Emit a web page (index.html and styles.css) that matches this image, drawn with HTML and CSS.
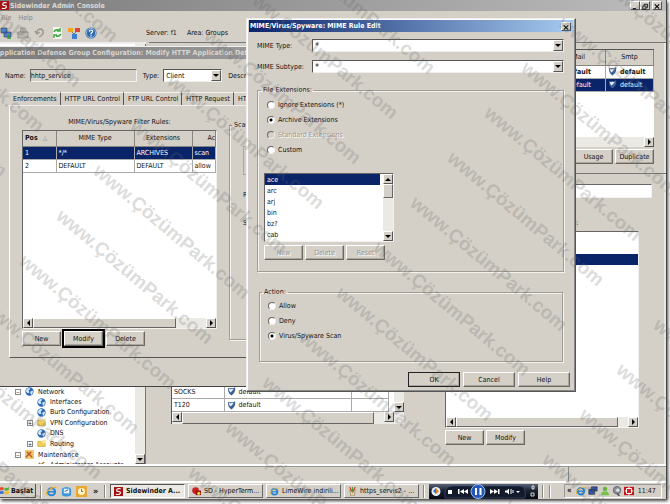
FILE: index.html
```html
<!DOCTYPE html>
<html lang="en">
<head>
<meta charset="utf-8">
<title>Sidewinder Admin Console</title>
<link rel="stylesheet" href="styles.css">
</head>
<body>
<svg class="defs" width="0" height="0" aria-hidden="true">
  <symbol id="globe" viewBox="0 0 10 10"><circle cx="5" cy="5" r="4.6" fill="#2a68b8"/><path d="M2 2Q5 0 6 2L4 4 5 6 3 7 1 5zM6 5L9 4Q9 7 7 9L6 7z" fill="#d5eafa"/></symbol>
  <symbol id="shield" viewBox="0 0 10 10"><path d="M1 1Q3 2 5 1 7 2 9 0 10 6 5 9.500 1 7 1 1z" fill="#3c5f96"/><path d="M2 2Q4 3 5 2 7 3 8 2L4 6Q2 5 2 2z" fill="#e4edf8"/></symbol>
  <symbol id="sidew" viewBox="0 0 10 10"><path fill="#a31515" d="M0 0H10V10H0z"/><path d="M7.500 2Q3 1 3 3.500 3 5 5 5 7.500 5 7 7 6 9 2 8" fill="none" stroke="#fff" stroke-width="1.300"/></symbol>
  <symbol id="ie" viewBox="0 0 12 12"><circle cx="6" cy="6.300" r="3.900" fill="none" stroke="#2484d8" stroke-width="2.200"/><path d="M3 6.300H10" stroke="#2484d8" stroke-width="1.600"/><path d="M1 10Q-1 6 5 3 10 0 11.500 2" fill="none" stroke="#e9b52a" stroke-width="1.200"/></symbol>
  <symbol id="folder" viewBox="0 0 12 10"><path d="M1 2H5L6 3H11V9H1z" fill="#f1cc55" stroke="#b98b1d" stroke-width=".6"/><path d="M7 0H12V5H7z" fill="#f9e88c"/></symbol>
</svg>

<main class="screen">
  <header class="app-title"><svg class="i9"><use href="#sidew"/></svg><span>Sidewinder Admin Console</span>
    <div class="caps">
      <button class="cap" aria-label="Minimize"><svg viewBox="0 0 8 8"><path d="M1.500 6.500H5" stroke="#000" stroke-width="1.300"/></svg></button><button class="cap" aria-label="Restore"><svg viewBox="0 0 8 8"><path d="M3 3V1.500H7V5H5.500M1.500 3.500H5V7H1.500z" fill="none" stroke="#000"/></svg></button><button class="cap cap-x" aria-label="Close console"><svg viewBox="0 0 8 8"><path d="M1.500 1.500L6.500 6.500M6.500 1.500L1.500 6.500" stroke="#000" stroke-width="1.200"/></svg></button>
    </div>
  </header>
  <nav class="menu"><a href="#file">File</a><a href="#help">Help</a></nav>
  <div class="tools">
    <button aria-label="Connect"><svg viewBox="0 0 12 12"><path d="M1 1H7V6H1zM4 5H11V10H4z" fill="#4a83cc" stroke="#335" stroke-width=".6"/><path d="M7 11H11M9 7V12" stroke="#36a33b" stroke-width="1.500"/></svg></button>
    <button aria-label="Save"><svg viewBox="0 0 12 12"><path d="M1 5H11V11H1zM4 1H8L10 5H3z" fill="#bdb9b2" stroke="#908d86" stroke-width=".8"/></svg></button>
    <button aria-label="Undo"><svg viewBox="0 0 12 12"><path d="M3 6Q3 2 7 2 11 4 8 8L5 10M1 4L3 7 6 5" fill="none" stroke="#9c9993" stroke-width="1.500"/></svg></button>
    <button aria-label="Refresh"><svg viewBox="0 0 12 12"><path d="M2 0H9L11 2V12H2z" fill="#f4f8f0"/><path d="M3 5Q4 2 8 3M9 1V4H6M10 7Q8 10 5 9M3 11V8H6" fill="none" stroke="#3ca83c" stroke-width="1.500"/></svg></button>
    <button aria-label="Areas"><svg viewBox="0 0 12 12"><path d="M2 3L6 7 10 3M6 7V10" stroke="#777" fill="none"/><path d="M0 1H5V5H0z" fill="#f1a51d"/><path d="M7 1H12V5H7z" fill="#dc4635"/><path d="M4 7H9V12H4z" fill="#3d7fd4"/></svg></button>
    <button aria-label="Help topics"><svg viewBox="0 0 12 12"><circle cx="6" cy="6" r="5.600" fill="#2d68ad"/><circle cx="6" cy="6" r="4.600" fill="none" stroke="#b9d3ee" stroke-width=".7"/><path d="M4.300 4.700Q4.500 3 6 3 8 3.200 7.500 5L6 6.500V7.500M6 8.300V9.500" fill="none" stroke="#fff" stroke-width="1.200"/></svg></button>
    <span class="server">Server: f1</span><span>Area: Groups</span>
  </div>

  <section class="work">
    <div class="tree-pane">
      <ul class="tree">
        <li class="lvl1"><i class="box">−</i><svg class="i9"><use href="#globe"/></svg>Network</li>
        <li class="lvl2"><svg class="i9"><use href="#globe"/></svg>Interfaces</li>
        <li class="lvl2"><svg class="i9"><use href="#globe"/></svg>Burb Configuration</li>
        <li class="lvl2x"><i class="box">+</i><svg class="i9"><use href="#folder"/></svg>VPN Configuration</li>
        <li class="lvl2"><svg class="i9"><use href="#globe"/></svg>DNS</li>
        <li class="lvl2x"><i class="box">+</i><svg class="i9"><use href="#folder"/></svg>Routing</li>
        <li class="lvl1"><i class="box">−</i><svg class="i9" viewBox="0 0 10 10"><path d="M0 0H10V10H0z" fill="#f4c76c"/><path d="M1 8L7 2M2 2L8 8" stroke="#bd5222" stroke-width="1.500"/></svg>Maintenance</li>
        <li class="lvl2"><svg class="i9" viewBox="0 0 10 10"><path d="M1 7L8 1M2 2L8 8" stroke="#a77b44" stroke-width="1.500"/></svg>Administrator Accounts</li>
      </ul>
      <div class="vbar"><button class="arw dn" aria-label="Scroll tree down"></button></div>
    </div>
    <div class="content">
      <div class="upper">
        <div class="groups">
          <table class="grid g-top">
            <thead><tr><th>Mail</th><th>Smtp</th></tr></thead>
            <tbody><tr class="b"><td>default</td><td><svg class="i9"><use href="#shield"/></svg>default</td></tr>
            <tr class="sel"><td>default</td><td><svg class="i9"><use href="#shield"/></svg>default</td></tr></tbody>
          </table>
          <div class="hbar"><button class="arw rt" aria-label="Scroll groups right"></button></div>
        </div>
        <div class="row"><button class="btn">Usage</button><button class="btn">Duplicate</button></div>
      </div>
      <div class="lower">
        <div class="left-low">
          <div class="services">
            <div class="svc-row">
              <table class="grid g-svc"><tbody>
                <tr><td>SOCKS</td><td><svg class="i9"><use href="#shield"/></svg>default</td><td></td></tr>
                <tr><td>T120</td><td><svg class="i9"><use href="#shield"/></svg>default</td><td></td></tr>
              </tbody></table>
              <div class="vbar"><button class="arw dn" aria-label="Scroll services down"></button></div>
            </div>
            <div class="hbar svc-bar"><button class="arw lt" aria-label="Scroll services left"></button><span class="thumb"></span><button class="arw rt" aria-label="Scroll services right"></button></div>
          </div>
        </div>
        <div class="right-low">
          <input class="well name-in" aria-label="Group name">
          <h2>Defenses in group:</h2>
          <div class="well members"><div class="picked"></div>
            <div class="hbar"><button class="arw lt" aria-label="Scroll members left"></button><span class="thumb"></span><button class="arw rt" aria-label="Scroll members right"></button></div>
          </div>
          <div class="row"><button class="btn">New</button><button class="btn">Modify</button></div>
        </div>
      </div>
    </div>
  </section>
  <div class="status"><span></span><span></span></div>

  <footer class="taskbar">
    <button class="start"><svg class="i9" viewBox="0 0 10 10"><path d="M0 2Q2 0 4 2V5Q2 3.500 0 5z" fill="#e54a2c"/><path d="M5 2Q7 3 10 1V4Q7 6 5 5z" fill="#57ad36"/><path d="M0 6Q2 4.500 4 6V9Q2 8 0 9z" fill="#3b70ce"/><path d="M5 6Q7 7 10 5V8Q7 10 5 9z" fill="#f2bd26"/></svg>Başlat</button>
    <i class="sep"></i>
    <div class="quick"><svg viewBox="0 0 12 12"><use href="#ie"/></svg><svg viewBox="0 0 12 12"><path d="M1 3Q6-1 11 3V10Q6 13 1 10z" fill="#3d94d6"/><path d="M3 3H9V8H3z" fill="#eaf5fc"/><path d="M4 6L8 4" stroke="#28578c"/></svg><svg viewBox="0 0 12 12"><path d="M0 0H12V12H0z" fill="#e8a832"/><circle cx="6" cy="6" r="3.800" fill="#fdf4d2"/><path d="M6 3V6H8" fill="none" stroke="#8f641b"/></svg><b>»</b></div>
    <i class="sep"></i>
    <button class="task on"><svg class="i9"><use href="#sidew"/></svg><span>Sidewinder A...</span></button>
    <button class="task"><svg class="i9" viewBox="0 0 10 10"><circle cx="4" cy="4" r="3.800" fill="#cf2020"/><path d="M4 4H10V9H4z" fill="#8d1512"/><circle cx="7.500" cy="7" r="1.800" fill="#e9d244"/></svg><span>SD - HyperTerm...</span></button>
    <button class="task"><svg class="i9"><use href="#ie"/></svg><span>LimeWire indirili...</span></button>
    <button class="task"><svg class="i9" viewBox="0 0 10 10"><path d="M2 3H8L7 10H3z" fill="#d9cfae" stroke="#8a6f4d" stroke-width=".6"/><path d="M2 0L4 5M8 0L5 6" stroke="#cf3d27" stroke-width="1.300"/><path d="M5 0V5" stroke="#4b9a3d" stroke-width="1.300"/></svg><span>https_servis2 - ...</span></button>
    <i class="sep"></i>
    <svg class="media" viewBox="0 0 109 15"><defs><linearGradient id="mg" x2="0" y2="1"><stop stop-color="#5a6478"/><stop offset=".45" stop-color="#19202e"/><stop offset="1" stop-color="#060a14"/></linearGradient></defs><path d="M0 0H109V15H0z" fill="url(#mg)"/><path d="M16 14Q14 2 24 2H90Q98 2 96 14z" fill="#121a2b" stroke="#3c5274" stroke-width=".7"/><circle cx="7" cy="7.500" r="4.500" fill="#e8f0fa"/><path d="M7 4L10 7.500 7 10z" fill="#e18329"/><path d="M4 7L7 4V10z" fill="#2a74cb"/><path d="M19 6H23V10H19zM29 5H30.500V10H29zM35 5V10L31 7.500zM39 5V10L35 7.500zM61 5V10L65 7.500zM65 5V10L69 7.500zM69 5H70.500V10H69zM76 6.500H78L80 4.500V10.500L78 8.500H76zM87 7H91L89 9z" fill="#fff"/><path d="M82 5V10M84 6V9" stroke="#fff"/><circle cx="49" cy="7.500" r="7" fill="#2457b8" stroke="#9bc1f2"/><path d="M46 4H48V11H46zM50.500 4H52.500V11H50.500z" fill="#fff"/><path d="M103 2H105V5H103zM102 9H105V12H102z" fill="none" stroke="#fff" stroke-width=".8"/></svg>
    <i class="sep"></i><i class="sep"></i>
    <div class="tray"><b>«</b><svg viewBox="0 0 12 12"><use href="#ie"/></svg><svg viewBox="0 0 12 12"><path d="M4 1H11V6H4zM1 4H8V10H1z" fill="#3158ae" stroke="#223" stroke-width=".7"/></svg><svg viewBox="0 0 12 12"><circle cx="6" cy="3.500" r="2.700" fill="#68b440"/><path d="M1 11Q2 5 6 7 10 5 11 11z" fill="#74c34a"/></svg><svg viewBox="0 0 12 12"><circle cx="6" cy="5" r="4.500" fill="#8c939e" stroke="#5c6068"/><circle cx="7" cy="5" r="2" fill="#dfe3e8"/><path d="M6 9L9 12" stroke="#555" stroke-width="2"/></svg><svg viewBox="0 0 12 12"><path d="M0 1H12V11H0z" fill="#c5161d"/><path d="M3 3H9V9H3zM6 1V4M6 8V11M1 6H4M8 6H11" fill="none" stroke="#fff" stroke-width="1.200"/></svg><time>11:47</time></div>
  </footer>

  <section class="win app-win">
    <h1 class="bar off">Application Defense Group Configuration: Modify HTTP Application Defense</h1>
    <div class="form-row"><label for="nm">Name:</label><input id="nm" class="well" value="hhtp_service" readonly><label for="ty">Type:</label><span class="pick"><select id="ty"><option>Client</option></select><i class="arw dn"></i></span><span>Description:</span></div>
    <nav class="tabs"><button>Enforcements</button><button>HTTP URL Control</button><button>FTP URL Control</button><button>HTTP Request</button><button>HTTP Reply</button></nav>
    <div class="panel">
      <div class="rules">
        <h2>MIME/Virus/Spyware Filter Rules:</h2>
        <div class="well rules-box">
          <table class="grid g-rules">
            <thead><tr><th class="first">Pos <small>△</small></th><th>MIME Type</th><th>Extensions</th><th>Action</th></tr></thead>
            <tbody><tr class="sel"><td>1</td><td>*/*</td><td>ARCHIVES</td><td>scan</td></tr><tr><td>2</td><td>DEFAULT</td><td>DEFAULT</td><td>allow</td></tr></tbody>
          </table>
          <div class="hbar"><button class="arw lt" aria-label="Scroll rules left"></button><span class="thumb"></span><button class="arw rt" aria-label="Scroll rules right"></button></div>
        </div>
        <div class="row"><button class="btn">New</button><button class="btn marked">Modify</button><button class="btn">Delete</button></div>
      </div>
      <fieldset class="scan"><legend>Scan</legend><div class="scan-box"></div><p>R</p><p>S</p></fieldset>
    </div>
  </section>

  <section class="win dialog">
    <h1 class="bar on"><span>MIME/Virus/Spyware: MIME Rule Edit</span><button class="cap" aria-label="Close dialog"><svg viewBox="0 0 8 8"><path d="M1.500 1.500L6.500 6.500M6.500 1.500L1.500 6.500" stroke="#000" stroke-width="1.200"/></svg></button></h1>
    <div class="dlg-body">
      <div class="pair"><label for="mt">MIME Type:</label><span class="pick"><select id="mt"><option>*</option></select><i class="arw dn"></i></span></div>
      <div class="pair"><label for="ms">MIME Subtype:</label><span class="pick"><select id="ms"><option>*</option></select><i class="arw dn"></i></span></div>
      <fieldset class="ext"><legend>File Extensions:</legend>
        <label class="opt"><input type="radio" name="ext">Ignore Extensions (*)</label>
        <label class="opt"><input type="radio" name="ext" checked>Archive Extensions</label>
        <label class="opt dis"><input type="radio" name="ext" disabled>Standard Extensions</label>
        <label class="opt"><input type="radio" name="ext">Custom</label>
        <div class="well listbox"><ul><li class="sel">ace</li><li>arc</li><li>arj</li><li>bin</li><li>bz?</li><li>cab</li></ul><div class="vbar"><button class="arw up" aria-label="Scroll list up"></button><span class="thumb"></span><button class="arw dn" aria-label="Scroll list down"></button></div></div>
        <div class="row"><button class="btn" disabled>New</button><button class="btn" disabled>Delete</button><button class="btn" disabled>Reset</button></div>
      </fieldset>
      <fieldset class="act"><legend>Action:</legend>
        <label class="opt"><input type="radio" name="act">Allow</label>
        <label class="opt"><input type="radio" name="act">Deny</label>
        <label class="opt"><input type="radio" name="act" checked>Virus/Spyware Scan</label>
      </fieldset>
      <div class="row ends"><button class="btn ok">OK</button><button class="btn">Cancel</button><button class="btn">Help</button></div>
    </div>
  </section>
</main>
<svg class="marks" aria-hidden="true"></svg>
<script src="marks.js"></script>
</body>
</html>
```
FILE: styles.css
```css
* { box-sizing: border-box; margin: 0; padding: 0; }
html, body { height: 100%; }
body { overflow: hidden; background: #fff; color: #111; font: 7px/10px "DejaVu Sans Condensed", "DejaVu Sans", sans-serif; }
button, input, select { font: inherit; color: inherit; border: 0; border-radius: 0; background: #d4d0c8; }
h1, h2 { font: inherit; }
ul { list-style: none; }
a { color: inherit; text-decoration: none; }
table { border-collapse: collapse; table-layout: fixed; width: 100%; }
svg { display: block; flex: none; }
.defs, .marks { position: absolute; }
.i9 { width: 9px; height: 9px; }
.marks { inset: 0; width: 100%; height: 100%; z-index: 9; pointer-events: none; fill: rgba(100, 100, 100, .24); font: bold 19px "Liberation Sans", sans-serif; }

.screen { position: relative; display: flex; flex-direction: column; height: calc(100% - 5px); margin-right: 3px; background: #d4d0c8; border-right: 1px solid #444; box-shadow: 1px 2px 3px #444; overflow: hidden; }
.app-title { display: flex; align-items: center; gap: 1px; height: 11px; font-weight: bold; color: #dedbd4; background: linear-gradient(90deg, #7c7c7c, #bcbcbc); }
.caps { margin-left: auto; display: flex; padding-right: 4px; }
.cap { width: 10px; height: 9px; padding: 1px; border: 1px solid; border-color: #fff #555 #555 #fff; }
.cap svg { width: 8px; height: 7px; margin-left: -1px; }
.cap-x { margin-left: 2px; }
.menu { display: flex; gap: 7px; height: 13px; padding: 2px 1px; color: #8b8780; }
.tools { display: flex; align-items: center; gap: 5px; height: 18px; padding-bottom: 1px; }
.tools button { width: 12px; height: 12px; }
.server { margin: 0 5px 0 44px; }

.well { background: #fff; border: 1px solid; border-color: #666 #f4f2ee #f4f2ee #666; }
.btn { width: 39px; height: 15px; text-align: center; border: 1px solid; border-color: #fff #6a6761 #6a6761 #fff; box-shadow: inset -1px -1px #aaa69e; }
.btn:disabled { color: #98948d; text-shadow: 1px 1px #fff; }
.row { display: flex; gap: 2px; }
.arw { display: grid; place-items: center; flex: none; width: 10px; height: 10px; background: #d4d0c8; border: 1px solid; border-color: #fff #555 #555 #fff; }
.arw::after { content: ""; border: 2px solid transparent; }
.dn::after { border-width: 3px 3px 0; border-top-color: #000; }
.up::after { border-width: 0 3px 3px; border-bottom-color: #000; }
.lt::after { border-width: 3px 3px 3px 0; border-right-color: #000; }
.rt::after { border-width: 3px 0 3px 3px; border-left-color: #000; }
.hbar { display: flex; justify-content: flex-end; height: 10px; background: #ebe9e4; }
.vbar { display: flex; flex-direction: column; justify-content: flex-end; width: 10px; background: #ebe9e4; }
.thumb { background: #d4d0c8; border: 1px solid; border-color: #fff #666 #666 #fff; }
.hbar .thumb { flex: 1; margin-right: 10px; }
.grid th { font-weight: normal; height: 15px; background: #d4d0c8; border-right: 1px solid #88857f; border-bottom: 1px solid #88857f; }
.grid td { height: 13px; padding: 0 2px; border-right: 1px solid #aaa; border-bottom: 1px solid #aaa; white-space: nowrap; overflow: hidden; }
.grid td svg { display: inline-block; vertical-align: middle; margin-right: 3px; }
.sel, .grid .sel { background: #0a246a; color: #fff; }
.b { font-weight: bold; }

.work { flex: 1; display: flex; min-height: 0; }
.tree-pane { display: flex; align-items: flex-end; width: 149px; background: #fff; border-right: 3px solid #d4d0c8; box-shadow: inset 0 2px #eee, inset -1px 0 #777; }
.tree-pane .vbar { align-self: stretch; margin-right: 1px; }
.tree { flex: 1; height: 78px; overflow: hidden; white-space: nowrap; }
.tree li { display: flex; align-items: center; gap: 4px; height: 10px; }
.tree .lvl1 { height: 11px; padding-left: 15px; }
.tree .lvl2 { padding-left: 37px; }
.tree .lvl2x { height: 11px; padding-left: 27px; }
.box { display: grid; place-items: center; width: 6px; height: 6px; border: 1px solid #8a8a8a; font: 6px/4px "Liberation Sans", sans-serif; }
.content { flex: 1; display: flex; flex-direction: column; border-top: 1px solid #777; padding-left: 22px; box-shadow: inset -2px 0 #e8e6e1; }
.upper { height: 131px; padding: 6px 12px 0 0; border-bottom: 1px solid #777; }
.groups { height: 98px; margin-bottom: 2px; display: flex; flex-direction: column; justify-content: space-between; background: #fff; border-top: 1px solid #555; }
.g-top th:last-child { width: 48px; }
.g-top tr > :first-child { padding-right: 14px; text-align: right; }
.g-top th:first-child { padding-right: 20px; }
.upper .row { justify-content: flex-end; }
.lower { flex: 1; display: flex; justify-content: space-between; }
.left-low { display: flex; align-items: flex-end; padding-bottom: 40px; }
.services { width: 233px; border-left: 1px solid #555; }
.svc-row { display: flex; background: #fff; }
.svc-row .vbar { margin-left: 5px; }
.g-svc { flex: 1; }
.g-svc td:nth-child(1) { width: 52px; }
.g-svc td:nth-child(3) { width: 37px; }
.svc-bar { padding-right: 10px; height: 12px; }
.right-low { display: flex; flex-direction: column; width: 207px; margin-right: 14px; padding: 10px 0 19px; }
.name-in { width: 100%; height: 14px; }
.right-low h2 { margin: 20px 0 3px 74px; }
.members { flex: 1; width: 194px; margin-bottom: 2px; display: flex; flex-direction: column; justify-content: space-between; }
.picked { margin-top: 22px; height: 11px; background: #0a246a; }
.status { display: flex; height: 18px; border-top: 2px solid #fff; box-shadow: inset 0 1px #999; gap: 2px; }
.status span { flex: 1; border-bottom: 1px solid #fff; }
.status span:last-child { flex: 0 0 98px; border-left: 1px solid #888; }

.taskbar { display: flex; align-items: center; height: 17px; padding-right: 4px; border-top: 1px solid #fff; gap: 3px; }
.start { display: flex; align-items: center; gap: 2px; width: 36px; height: 14px; font-weight: bold; border-right: 1px solid #555; border-bottom: 1px solid #555; white-space: nowrap; }
.sep { width: 2px; height: 13px; border-left: 1px solid #888; border-right: 1px solid #fff; margin: 0 1px; }
.quick { display: flex; align-items: center; gap: 4px; width: 54px; }
.quick svg { width: 11px; height: 11px; }
.quick b { margin-left: 2px; font-size: 9px; }
.task { display: flex; align-items: center; gap: 3px; flex: 0 1 75px; min-width: 0; height: 14px; padding-left: 3px; border: 1px solid; border-color: #fff #666 #666 #fff; white-space: nowrap; overflow: hidden; }
.task.on { font-weight: bold; background: #ebe9e4; border-color: #555 #fff #fff #555; }
.media { flex: none; width: 109px; height: 15px; }
.tray { display: flex; align-items: center; gap: 2px; width: 98px; height: 14px; padding-left: 2px; margin-left: auto; border: 1px solid; border-color: #999 #fff #fff #999; }
.tray svg { width: 10px; height: 10px; }
.tray b { margin-right: 2px; font-size: 8px; }
.tray time { margin-left: 2px; }

.win { position: absolute; background: #d4d0c8; }
.bar { display: flex; align-items: center; height: 12px; font-weight: bold; white-space: nowrap; overflow: hidden; }
.app-win { left: 0; top: 46px; width: 560px; height: 341px; border-bottom: 1px solid #444; border-top: 1px solid #eee; }
.bar.off { color: #d9d6d0; background: linear-gradient(90deg, #7c7c7c, #bcbcbc); text-indent: -5px; }
.form-row { display: flex; align-items: center; height: 13px; margin: 10px 0 10px 5px; gap: 4px; }
.form-row .well { width: 107px; height: 13px; margin-right: 2px; background: #d4d0c8; }
.form-row .pick { flex: 0 0 59px; margin-right: 2px; }
.pick { position: relative; flex: 1; display: flex; height: 13px; background: #fff; border: 1px solid; border-color: #555 #eee #eee #555; }
.pick select { appearance: none; width: 100%; padding-left: 2px; background: transparent; outline: 0; }
.pick .arw { position: absolute; right: 0; top: 0; height: 11px; pointer-events: none; }
.tabs { display: flex; height: 13px; margin-left: 9px; }
.tabs button { padding: 0 3px 0 4px; border-top: 1px solid #f4f2ee; border-right: 1px solid #555; white-space: nowrap; }
.panel { display: flex; gap: 12px; margin-left: 9px; height: 253px; padding: 11px 0 0 12px; border: 1px solid; border-color: #eee #555 #555 #fff; }
.rules { width: 195px; }
.rules h2 { text-align: center; height: 13px; }
.rules-box { height: 199px; margin-bottom: 2px; display: flex; flex-direction: column; justify-content: space-between; overflow: hidden; }
.g-rules th:nth-child(1) { width: 33px; }
.g-rules th:nth-child(2) { width: 78px; }
.g-rules th:nth-child(3) { width: 58px; }
.g-rules th:nth-child(4) { padding-left: 15px; overflow: hidden; text-align: left; }
.grid .first { font-weight: bold; text-align: left; padding-left: 2px; }
.first small { font-size: 6px; color: #777; margin-left: 3px; }
.rules-box .thumb { margin-right: 30px; }
.marked { outline: 2px solid #000; margin: 0 1px; }
fieldset { border: 1px solid #a09d96; box-shadow: 1px 1px #f4f2ee, inset 1px 1px #f4f2ee; min-width: 0; }
legend { padding: 0 2px; }
.scan { flex: 1; height: 220px; margin-top: 3px; padding-left: 13px; }
.scan legend { margin-left: -11px; }
.scan-box { height: 29px; margin: 16px 0 15px; border: 1px solid #aaa69e; }
.scan p { height: 28px; }

.dialog { left: 246px; top: 18px; width: 330px; height: 374px; border: 1px solid; border-color: #eee #555 #555 #eee; box-shadow: inset -1px -1px #888, inset 1px 1px #fff; padding: 1px 2px 2px; }
.bar.on { justify-content: space-between; padding: 0 2px 0 1px; color: #fff; background: linear-gradient(90deg, #0a246a, #a6caf0); }
.dlg-body { padding: 7px 9px 0 8px; }
.pair { display: flex; align-items: center; margin-bottom: 8px; }
.pair label { width: 55px; }
.pair select { font-size: 9px; }
.ext, .act { padding: 1px 6px 0 8px; }
.ext legend { margin-left: -5px; }
.ext { height: 187px; margin-bottom: 15px; margin-top: 12px; padding-top: 2px; }
.act { height: 75px; margin: 0 1px 10px 2px; }
.act legend { margin-left: -6px; }
.opt { display: flex; align-items: center; gap: 3px; height: 15px; padding-left: 1px; }
.opt input { appearance: none; width: 8px; height: 8px; border-radius: 50%; background: #fff; border: 1px solid; border-color: #666 #eee #eee #666; }
.opt input:checked { background: radial-gradient(circle, #000 0 1px, #fff 2px); }
.opt.dis { color: #a09c95; text-shadow: 1px 1px #fff; }
.opt.dis input { background: #d4d0c8; }
.act .opt { margin-left: -1px; }
.listbox { display: flex; width: 130px; height: 69px; margin: 16px 0 3px -2px; }
.listbox ul { flex: 1; padding-right: 3px; }
.listbox li { height: 11px; line-height: 12px; padding-left: 2px; }
.listbox .vbar { justify-content: flex-start; }
.listbox .thumb { height: 14px; margin-bottom: auto; }
.ext .row { margin-left: -2px; }
.ends { justify-content: flex-end; gap: 3px; margin-right: -6px; }
.ends .btn { width: 52px; }
.ok { outline: 1px solid #222; outline-offset: -1px; }
```
FILE: marks.js
```js
// Diagonal watermark: staggered columns of the site name.
const layer = document.querySelector('.marks');
const columns = [[-225, 141, 2, 6], [18, 263, -4, 7], [261, 385, -3, 9], [504, 507, 0, 5]];
for (const [x, y, from, to] of columns) {
  for (let n = from; n <= to; n++) {
    const text = document.createElementNS('http://www.w3.org/2000/svg', 'text');
    text.setAttribute('transform', `translate(${x + n * 37} ${y - n * 45}) rotate(40)`);
    text.textContent = 'www.ÇözümPark.com';
    layer.append(text);
  }
}
```
